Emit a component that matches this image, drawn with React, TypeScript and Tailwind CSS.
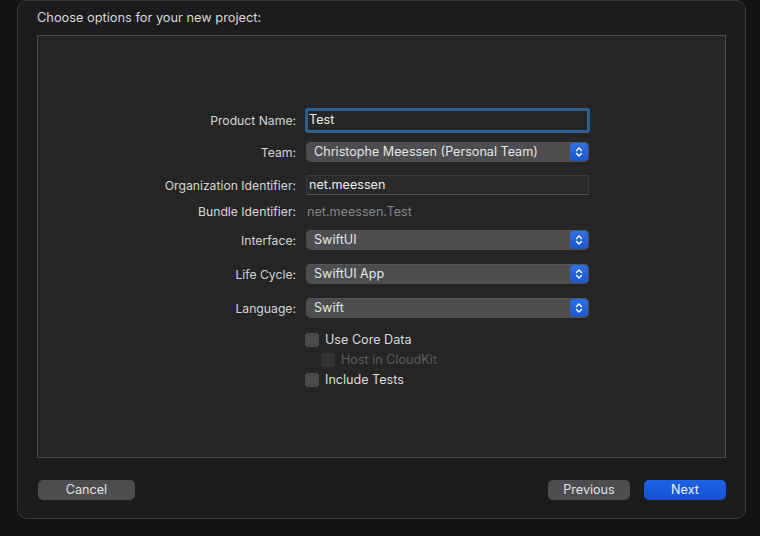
import React from 'react';

const font = { fontFamily: 'Inter, "Noto Sans", "Liberation Sans", sans-serif' };

function Stepper() {
  return (
    <div className="flex h-[18px] w-[18px] items-center justify-center rounded-[4px] bg-gradient-to-b from-[#2f6fe6] to-[#1b56cf]">
      <svg width="8" height="12" viewBox="0 0 8 12" fill="none">
        <path d="M1.5 4.5 L4 2 L6.5 4.5" stroke="white" strokeWidth="1.4" strokeLinecap="round" strokeLinejoin="round" />
        <path d="M1.5 7.5 L4 10 L6.5 7.5" stroke="white" strokeWidth="1.4" strokeLinecap="round" strokeLinejoin="round" />
      </svg>
    </div>
  );
}

function Label({ children }: { children: React.ReactNode }) {
  return <div className="w-[259px] shrink-0 pr-[1px] pt-[2px] text-right text-[12.2px] text-[#d6d6d6]">{children}</div>;
}

function Popup({ value }: { value: string }) {
  return (
    <div className="flex h-[20px] w-[283px] items-center justify-between rounded-[5px] bg-[#4d4d4f] pl-[8px] pr-[1px] text-[#e6e6e6] shadow-[0_0.5px_0_#5e5e60_inset]">
      <span>{value}</span>
      <Stepper />
    </div>
  );
}

function Checkbox({ label, disabled }: { label: string; disabled?: boolean }) {
  return (
    <div className="flex h-[14px] items-center gap-[6px]">
      <div className={`h-[14px] w-[14px] rounded-[3px] ${disabled ? 'bg-[#343434]' : 'bg-[#4a4a4c]'}`} />
      <span className={disabled ? 'text-[#5c5c5c]' : 'text-[#dcdcdc]'}>{label}</span>
    </div>
  );
}

export default function App() {
  return (
    <div className="h-[536px] w-[760px] overflow-hidden bg-[#131214] text-[12.6px] leading-none" style={font}>
      {/* Dialog window */}
      <div className="ml-[17px] h-[519px] w-[729px] rounded-[10px] border border-[#3a3a3c] bg-[#1c1b1d] px-[19px]">
        <div className="flex h-[34px] items-center pt-[1px] text-[12.8px] text-[#d8d8d8]">Choose options for your new project:</div>

        {/* Options panel */}
        <div className="h-[423px] w-[689px] border border-[#4a4a4a] bg-[#252525] pt-[72px]">
          <div className="flex h-[25px] items-center gap-[9px]">
            <Label>Product Name:</Label>
            <div className="-ml-[1px] flex h-[25px] w-[285px] items-center rounded-[3px] border-[3px] border-[#2d5f93] bg-[#262626] pl-[1px] text-[#ececec]">
              Test
            </div>
          </div>

          <div className="mt-[9px] flex h-[20px] items-center gap-[9px]">
            <Label>Team:</Label>
            <Popup value="Christophe Meessen (Personal Team)" />
          </div>

          <div className="mt-[13px] flex h-[20px] items-center gap-[9px]">
            <Label>Organization Identifier:</Label>
            <div className="flex h-[20px] w-[283px] items-center border border-[#3a3a3a] border-b-[#555555] bg-[#2a2a2a] pl-[2px] text-[#ececec]">
              net.meessen
            </div>
          </div>

          <div className="mt-[7px] flex h-[18px] items-center gap-[9px]">
            <Label>Bundle Identifier:</Label>
            <span className="pl-[1px] pt-[2px] text-[#858585]">net.meessen.Test</span>
          </div>

          <div className="mt-[10px] flex h-[20px] items-center gap-[9px]">
            <Label>Interface:</Label>
            <Popup value="SwiftUI" />
          </div>

          <div className="mt-[14px] flex h-[20px] items-center gap-[9px]">
            <Label>Life Cycle:</Label>
            <Popup value="SwiftUI App" />
          </div>

          <div className="mt-[14px] flex h-[20px] items-center gap-[9px]">
            <Label>Language:</Label>
            <Popup value="Swift" />
          </div>

          <div className="ml-[267px] mt-[15px] flex flex-col gap-[6px]">
            <Checkbox label="Use Core Data" />
            <div className="pl-[16px]">
              <Checkbox label="Host in CloudKit" disabled />
            </div>
            <Checkbox label="Include Tests" />
          </div>
        </div>

        {/* Buttons */}
        <div className="mt-[22px] flex items-center">
          <button className="ml-[1px] h-[20px] w-[97px] rounded-[5px] bg-[#4d4c4f] text-[#e2e2e2]">Cancel</button>
          <div className="flex-1" />
          <button className="h-[20px] w-[82px] rounded-[5px] bg-[#4d4c4f] text-[#e2e2e2]">Previous</button>
          <button className="ml-[14px] h-[20px] w-[82px] rounded-[5px] bg-gradient-to-b from-[#1f62e6] to-[#1550d4] text-[#f2f2f2]">
            Next
          </button>
        </div>
      </div>
    </div>
  );
}
